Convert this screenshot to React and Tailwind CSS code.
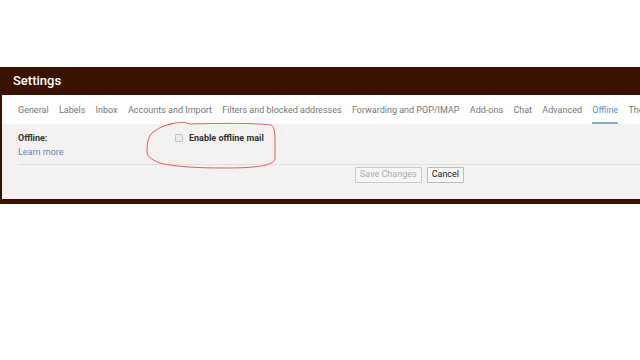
import React from 'react';

const tabs = [
  'General',
  'Labels',
  'Inbox',
  'Accounts and Import',
  'Filters and blocked addresses',
  'Forwarding and POP/IMAP',
  'Add-ons',
  'Chat',
  'Advanced',
  'Offline',
  'Themes',
];

const App = () => {
  return (
    <div className="relative w-[640px] h-[360px] bg-white overflow-hidden font-['Roboto',sans-serif]">
      <div className="h-[67px]" />
      <div className="bg-[#3a1200] pl-[2px] pb-[5px]">
        <div className="h-[28px] flex items-center pl-[11px] text-white text-[13px] font-medium">
          Settings
        </div>

        {/* Tabs */}
        <div className="bg-white h-[29px] flex items-stretch gap-[10.3px] pl-[16px] whitespace-nowrap overflow-hidden text-[9px] text-[#777]">
          {tabs.map((t) => (
            <div
              key={t}
              className={`flex items-center pt-[4px] ${t === 'Offline' ? 'text-[#5b8fd0] border-b-2 border-[#8eaacb]' : 'border-b-2 border-transparent'}`}
            >
              {t}
            </div>
          ))}
        </div>

        {/* Offline settings */}
        <div className="bg-[#f3f2f1] h-[75px] pl-[16px] pt-[7px]">
          <div className="flex h-[30px]">
            <div className="w-[157px] text-[9px] leading-[14px]">
              <div className="font-bold text-[#333]">Offline:</div>
              <div className="text-[#5d86c4]">Learn more</div>
            </div>
            <div className="flex items-start gap-[6px] pt-[2px]">
              <div className="w-[8px] h-[8px] mt-[1px] border border-[#c4c4c4] bg-[#ececec] rounded-[1px]" />
              <span className="text-[9px] font-bold text-[#333] leading-[10px]">Enable offline mail</span>
            </div>
          </div>
          <div className="border-t border-[#e2e0de] mt-[3px] pt-[2px] pl-[337px] flex gap-[5px]">
            <button className="h-[16px] px-[4px] text-[9px] text-[#aaa] bg-[#f6f6f6] border border-[#ccc] rounded-[1px]">
              Save Changes
            </button>
            <button className="h-[16px] px-[4px] text-[9px] text-[#222] bg-[#f6f6f6] border border-[#bbb] rounded-[1px]">
              Cancel
            </button>
          </div>
        </div>
      </div>

      {/* Hand-drawn red annotation */}
      <svg className="absolute left-[145px] top-[121px]" width="134" height="50" viewBox="0 0 134 50">
        <path
          d="M25 3 C35 1 40 1 45 3 C80 2 110 2 126 4 C131 6 130 20 130 38 C128 45 110 47 80 47 C55 47 30 46 15 42 C5 38 2 35 2 30 C2 20 4 13 10 10 C15 6 20 4 27 3"
          fill="none"
          stroke="#f0585a"
          strokeWidth="1"
        />
      </svg>
    </div>
  );
};

export default App;
